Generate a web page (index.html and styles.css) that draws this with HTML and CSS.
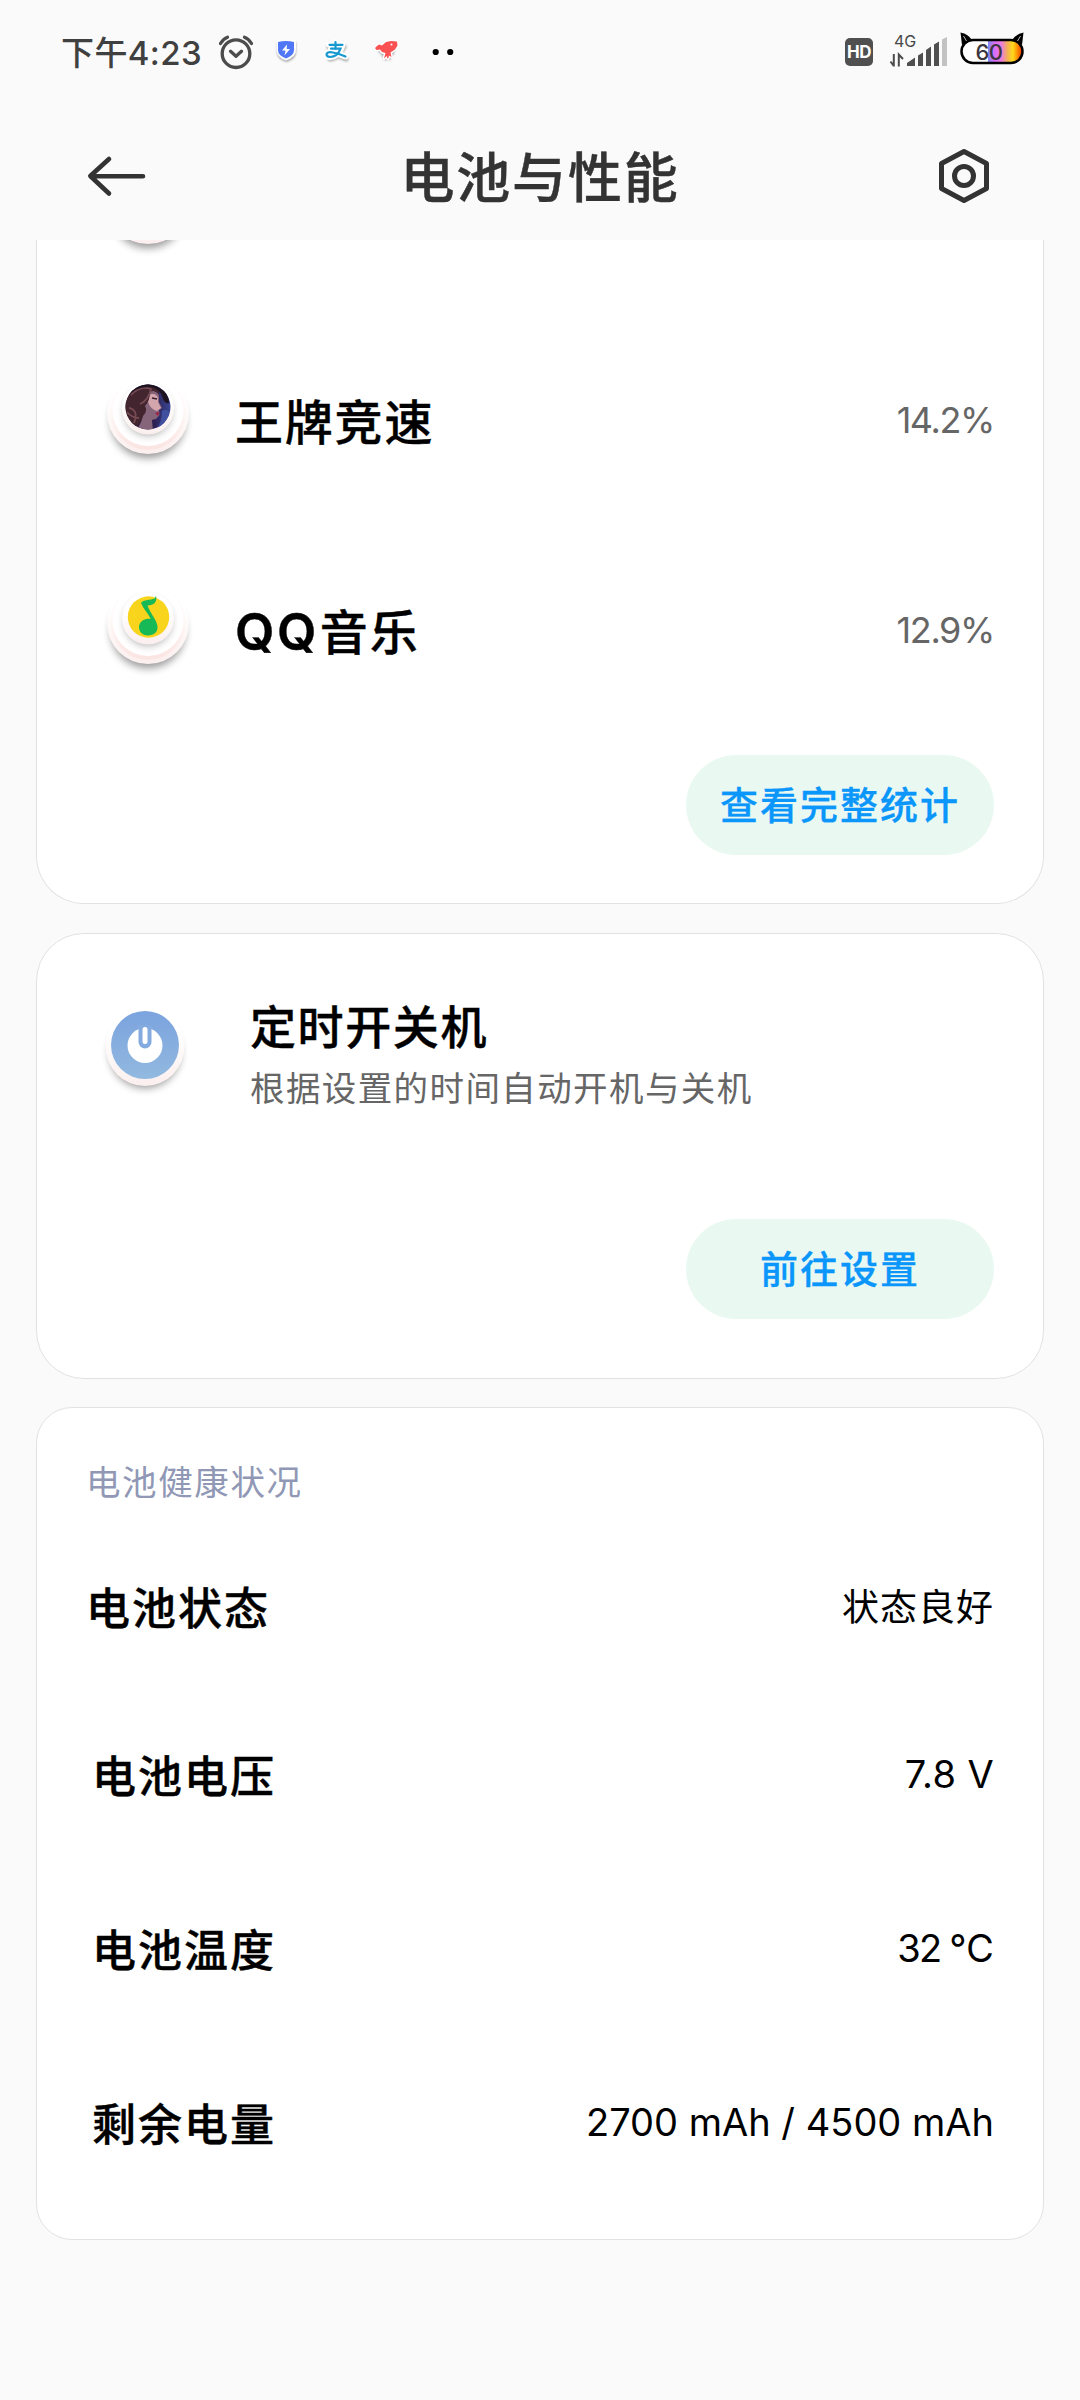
FILE: index.html
```html
<!DOCTYPE html>
<html lang="zh-CN">
<head>
<meta charset="utf-8">
<title>电池与性能</title>
<link rel="stylesheet" href="styles.css">
</head>
<body>
<svg class="defs" width="0" height="0" aria-hidden="true">
  <defs>
    <filter id="soft" x="-30%" y="-30%" width="160%" height="170%"><feGaussianBlur stdDeviation="4.5"/></filter>
    <filter id="tiny" x="-30%" y="-30%" width="160%" height="170%"><feGaussianBlur stdDeviation="1.3"/></filter>
    <linearGradient id="rim" x1="0" y1="0" x2="0" y2="1"><stop offset="0" stop-color="#fff"/><stop offset=".5" stop-color="#fff7f6"/><stop offset="1" stop-color="#fbe4e1"/></linearGradient>
    <linearGradient id="rim2" x1="0" y1="0" x2="0" y2="1"><stop offset=".3" stop-color="#fff"/><stop offset="1" stop-color="#fbefee"/></linearGradient>
    <linearGradient id="blue" x1="0" y1="0" x2="0" y2="1"><stop offset="0" stop-color="#7ba3de"/><stop offset="1" stop-color="#92b9df"/></linearGradient>
    <linearGradient id="rainbow" x1="0" y1="0" x2="1" y2="0"><stop offset="0" stop-color="#7f8cf5"/><stop offset=".2" stop-color="#dc6cf8"/><stop offset=".4" stop-color="#ef7fd8"/><stop offset=".56" stop-color="#f5b058"/><stop offset=".72" stop-color="#ffd91a"/><stop offset=".86" stop-color="#ff8a00"/><stop offset="1" stop-color="#f42c00"/></linearGradient>
    <linearGradient id="night" x1="0" y1="0" x2="1" y2="0"><stop offset="0" stop-color="#2c1830"/><stop offset=".6" stop-color="#2b1c4d"/><stop offset="1" stop-color="#3b4a9a"/></linearGradient>
    <clipPath id="face"><circle cx="60" cy="46" r="22.500"/></clipPath>
    <g id="dish">
      <circle cx="60" cy="60" r="37" fill="#000" opacity=".42" filter="url(#soft)"/>
      <circle cx="60" cy="52" r="41" fill="url(#rim2)"/>
      <circle cx="60" cy="51.500" r="37.500" fill="url(#rim)"/>
      <circle cx="60" cy="49.500" r="35.500" fill="#fff"/>
      <circle cx="60" cy="51" r="23" fill="#000" opacity=".36" filter="url(#soft)"/>
      <circle cx="60" cy="47.500" r="26" fill="url(#rim2)"/>
    </g>
  </defs>
</svg>

<div class="status">
  <span class="time">下午4:23</span>
  <svg class="tray" width="250" height="60" viewBox="210 22 250 60">
    <g fill="none" stroke="#4c4c4c" stroke-width="3.300" stroke-linecap="round">
      <circle cx="236" cy="53.700" r="13.800"/>
      <path d="M220.500 43.500Q223.500 38.500 227.500 37.200M251.500 43.500Q248.500 38.500 244.500 37.200"/>
      <path d="M230.500 51.300L236 56.300L241.500 51.300" stroke-linejoin="round"/>
    </g>
    <path d="M277 42H296V52Q296 59 286.500 62Q277 59 277 52Z" fill="#000" opacity=".35" filter="url(#tiny)"/>
    <path d="M276.500 40H296V50Q296 57 286 60.500Q276.500 57 276.500 50Z" fill="#fff"/>
    <path d="M278 42Q286 40 294 42V50Q294 55.500 286 58.500Q278 55.500 278 50Z" fill="#5077f6"/>
    <path d="M287 44.500L282 50.500H285.500L284.500 55.500L290 49H286.700Z" fill="#fff"/>
    <g fill="none" stroke-linecap="round">
      <path d="M329 47H344M336 44V51M330 52H341Q338 58 330 59M334 54L346 59" stroke="#000" stroke-width="5" opacity=".3" filter="url(#tiny)"/>
      <path d="M329 44.500H342.500M335.500 42V49M331 49H341Q338 57 330 57C324 57 325 51 333 52.500Q340 54 345.500 56.500" stroke="#fff" stroke-width="6"/>
      <path d="M329.500 44.800H342.500M335.500 42V49M331 48.700H340.500Q337.500 57 330 57C324.500 56.500 325.500 51 333 52.500Q340 54 345.500 56.500" stroke="#1699cf" stroke-width="2.200"/>
    </g>
    <path d="M375 48L386 42L397 43L394 53L390 60H384L382 55Z" fill="#000" opacity=".35" filter="url(#tiny)"/>
    <path d="M375 48L377 46L379 44.500L382 45.500L386 42L391 41L397 41.500L397.500 45.500L395 49.500L390.500 52.500L391.500 57L389 55.500L388 59L386.500 56L384 58.500L385.500 53L382 52L380 49.500L376.500 50Z" fill="#fa5152" stroke="#fff" stroke-width="3" stroke-linejoin="round" paint-order="stroke"/>
    <circle cx="391.500" cy="44.500" r="1" fill="#fff"/>
    <circle cx="435.700" cy="52" r="3.100"/><circle cx="450.200" cy="52" r="3.100"/>
  </svg>
  <span class="grow"></span>
  <span class="hd">HD</span>
  <svg class="signal" width="146" height="60" viewBox="884 22 146 60">
    <text x="894" y="47" class="net">4G</text>
    <path d="M893.800 54V66.500M890.500 61.500L893.800 66M898.800 66.500V54.500L903 59" fill="none" stroke="#4c4c4c" stroke-width="2"/>
    <g fill="#4f4f4f"><path d="M907 66V63L915 57.500V66Z"/><path d="M918 66V55.500L923 52.500V66Z"/><path d="M926 66V50L931 46.500V66Z"/><path d="M934 66V44.500L939 41.500V66Z"/></g>
    <path d="M942 66V39.500L947 37V66Z" fill="#c2c2c2"/>
    <rect x="961.500" y="40" width="61" height="23" rx="11.500" fill="#fff"/>
    <path d="M988 40H1011A11.500 11.500 0 0 1 1011 63H988Z" fill="url(#rainbow)"/>
    <rect x="961.500" y="40" width="61" height="23" rx="11.500" fill="none" stroke="#000" stroke-width="2.500"/>
    <path d="M962 45L960.500 32.500Q968 34 971.500 39.500Z"/><path d="M1022 45L1023.500 32.500Q1016 34 1012.500 39.500Z"/>
    <path d="M963.500 36L966.500 41M1020.500 36L1017.500 41" stroke="#bbb" stroke-width="1"/>
    <text x="975.500" y="60" class="level">60</text>
  </svg>
</div>

<header class="bar">
  <svg width="60" height="60" viewBox="86 146 60 60"><path d="M109 159L90.300 176L109 193.500M91 176.300H143" fill="none" stroke="#333" stroke-width="4.600" stroke-linecap="round" stroke-linejoin="round"/></svg>
  <h1>电池与性能</h1>
  <svg width="60" height="60" viewBox="934 146 60 60"><path d="M964 151.500L986.500 163.500V188.500L964 200.500L941.500 188.500V163.500Z" fill="none" stroke="#333" stroke-width="5" stroke-linejoin="round"/><circle cx="964" cy="176" r="9.500" fill="none" stroke="#333" stroke-width="5"/></svg>
</header>

<main>
  <section class="card usage">
    <div class="row cut"><svg width="120" height="120" viewBox="0 0 120 120"><use href="#dish"/></svg></div>
    <div class="row">
      <svg width="120" height="120" viewBox="0 0 120 120"><use href="#dish"/>
        <g clip-path="url(#face)">
          <rect x="36" y="22" width="48" height="48" fill="url(#night)"/>
          <path d="M74 50Q84 44 84 70H66Q74 64 74 50Z" fill="#40509f"/>
          <path d="M56 30Q66 27 71 34L71 41L74 47L71 49L71.500 54L68 58L64 59L65 70H47Q57 60 54 46Z" fill="#86647a"/>
          <path d="M60 34Q68 31 70 37L70 41L73 47L69 50Q63 49 60 41Z" fill="#d3a5ad"/>
          <path d="M36 46Q36 26 58 23Q72 24 71 33Q66 28 62 31Q62 40 57 45Q60 50 55 55Q52 66 42 68Z" fill="#42252f"/>
          <path d="M43 34Q52 24 63 28Q60 40 52 43M41 47Q51 49 46 62M39 51Q44 57 51 57" fill="none" stroke="#754a52" stroke-width="1.800"/>
          <path d="M64 37L69 38" stroke="#37212e" stroke-width="1.500"/><path d="M67 52L71.500 51L70 55Z" fill="#a11f45"/>
          <path d="M38 34Q44 22 60 22Q80 22 81 42Q77 43 75 38Q72 26 60 26Q46 26 38 38Z" fill="#1c1220"/>
        </g>
      </svg>
      <span class="name">王牌竞速</span><span class="pct">14.2%</span>
    </div>
    <div class="row">
      <svg width="120" height="120" viewBox="0 0 120 120"><use href="#dish"/>
        <circle cx="60.500" cy="46" r="20.700" fill="#f8d41d"/>
        <path d="M68 24.500C67 31 57.500 26.500 53 32L54 34C57 40 61.500 44 62.500 48C56.500 46.500 51 51 51 56C51 61 55 64.500 60 64.500C66 64.500 70 61 69.500 55.500C69 49 62 42 59.500 34.500C66 34.500 69.500 31 68 24.500Z" fill="#17b957"/>
      </svg>
      <span class="name"><span class="latin">QQ</span>音乐</span><span class="pct">12.9%</span>
    </div>
    <div class="action"><button>查看完整统计</button></div>
  </section>

  <section class="card timer">
    <div class="entry">
      <svg width="120" height="120" viewBox="0 0 120 120">
        <circle cx="60" cy="68" r="35" fill="#000" opacity=".42" filter="url(#soft)"/>
        <circle cx="60" cy="61.500" r="39.500" fill="url(#rim2)"/>
        <circle cx="60" cy="60" r="34" fill="url(#blue)"/>
        <circle cx="60" cy="60.500" r="17.500" fill="#fff"/>
        <path d="M53.500 40V57A6.500 6.500 0 0 0 66.500 57V40Z" fill="#84abdf"/>
        <path d="M60 44.500V56.500" stroke="#fff" stroke-width="5" stroke-linecap="round"/>
      </svg>
      <div class="copy"><h2>定时开关机</h2><p>根据设置的时间自动开机与关机</p></div>
    </div>
    <div class="action"><button>前往设置</button></div>
  </section>

  <section class="card health">
    <h3>电池健康状况</h3>
    <dl>
      <div class="stat first"><dt>电池状态</dt><dd class="cn">状态良好</dd></div>
      <div class="stat"><dt>电池电压</dt><dd class="volt">7.8 V</dd></div>
      <div class="stat"><dt>电池温度</dt><dd class="deg">32 ℃</dd></div>
      <div class="stat"><dt>剩余电量</dt><dd class="mah">2700 mAh / 4500 mAh</dd></div>
    </dl>
  </section>
</main>
</body>
</html>
```
FILE: styles.css
```css
* { box-sizing: border-box; margin: 0; padding: 0; }
body { width: 1080px; height: 2400px; background: #fafafa; color: #000; font-family: Inter, "Noto Sans CJK SC", sans-serif; overflow: hidden; }
svg { display: block; flex: none; }
.defs { position: absolute; }
.grow { flex: 1; }

.status { display: flex; align-items: center; height: 104px; padding: 0 50px 0 61px; color: #404040; white-space: nowrap; }
.time { width: 149px; padding-top: 2px; font-size: 33px; font-weight: 500; letter-spacing: 0.4px; line-height: 40px; }
.hd { width: 28px; height: 28px; margin-right: 11px; border-radius: 5px; background: #505050; color: #fff; font-size: 17px; font-weight: 700; line-height: 29px; text-align: center; letter-spacing: -0.5px; }
.net { font-size: 16px; fill: #484848; }
.level { font-size: 22px; font-weight: 500; fill: #3d3540; letter-spacing: -0.5px; }

.bar { display: flex; align-items: center; justify-content: space-between; height: 136px; padding: 8px 86px 0; }
h1 { padding-top: 5px; color: #333; font-size: 54px; font-weight: 500; letter-spacing: 1.8px; line-height: 72px; -webkit-text-stroke: 0.4px; }

.card { width: 1008px; margin: 0 auto 29px; border: 1px solid #e2e2e2; border-radius: 48px; background: #fff; overflow: hidden; }
.usage { height: 664px; border-top: 0; border-radius: 0 0 48px 48px; }
.row { display: flex; align-items: center; height: 210px; padding: 0 49px 0 51px; }
.row.cut { margin-top: -134px; }
.name { flex: 1; padding: 0 0 5px 27px; font-size: 48px; font-weight: 500; letter-spacing: 1.8px; -webkit-text-stroke: 0.4px; }
.latin { margin-right: 1px; letter-spacing: 2.5px; font-size: 51px; font-weight: 600; line-height: 1; }
.pct { padding-bottom: 2px; color: #666; font-size: 36px; letter-spacing: -1.4px; }
.action { display: flex; justify-content: flex-end; padding-right: 49px; }
.usage .action { padding-top: 19px; }
button { width: 308px; height: 100px; border: 0; border-radius: 50px; background: #e9f9f2; color: #0a96fa; font-family: inherit; font-size: 38px; font-weight: 500; letter-spacing: 2px; line-height: 100px; -webkit-text-stroke: 0.3px; }

.timer { height: 446px; margin-bottom: 28px; }
.entry { display: flex; padding: 51px 0 0 48px; height: 285px; }
.copy { padding-left: 45px; }
h2 { margin-top: 8px; font-size: 46px; font-weight: 500; letter-spacing: 1.6px; line-height: 68px; -webkit-text-stroke: 0.4px; }
.copy p { color: #666; font-size: 34.500px; letter-spacing: 1.4px; line-height: 56px; }

.health { height: 833px; border-radius: 36px; padding: 48px 49px 0; margin-bottom: 0; }
h3 { color: #9098b5; font-size: 34.500px; font-weight: 400; letter-spacing: 1.6px; line-height: 54px; }
.stat { display: flex; align-items: center; justify-content: space-between; height: 174px; padding-left: 6px; }
.first { height: 162px; margin-top: 16px; padding-left: 0; }
dt { padding-bottom: 3px; font-size: 44px; font-weight: 500; letter-spacing: 2px; -webkit-text-stroke: 0.4px; }
dd { padding-bottom: 2px; font-size: 38px; }
.cn { padding-bottom: 4px; font-size: 37px; letter-spacing: 1px; }
.volt { letter-spacing: 0.4px; }
.deg { padding-right: 2px; letter-spacing: -1.8px; }
.mah { letter-spacing: 0; }
```
